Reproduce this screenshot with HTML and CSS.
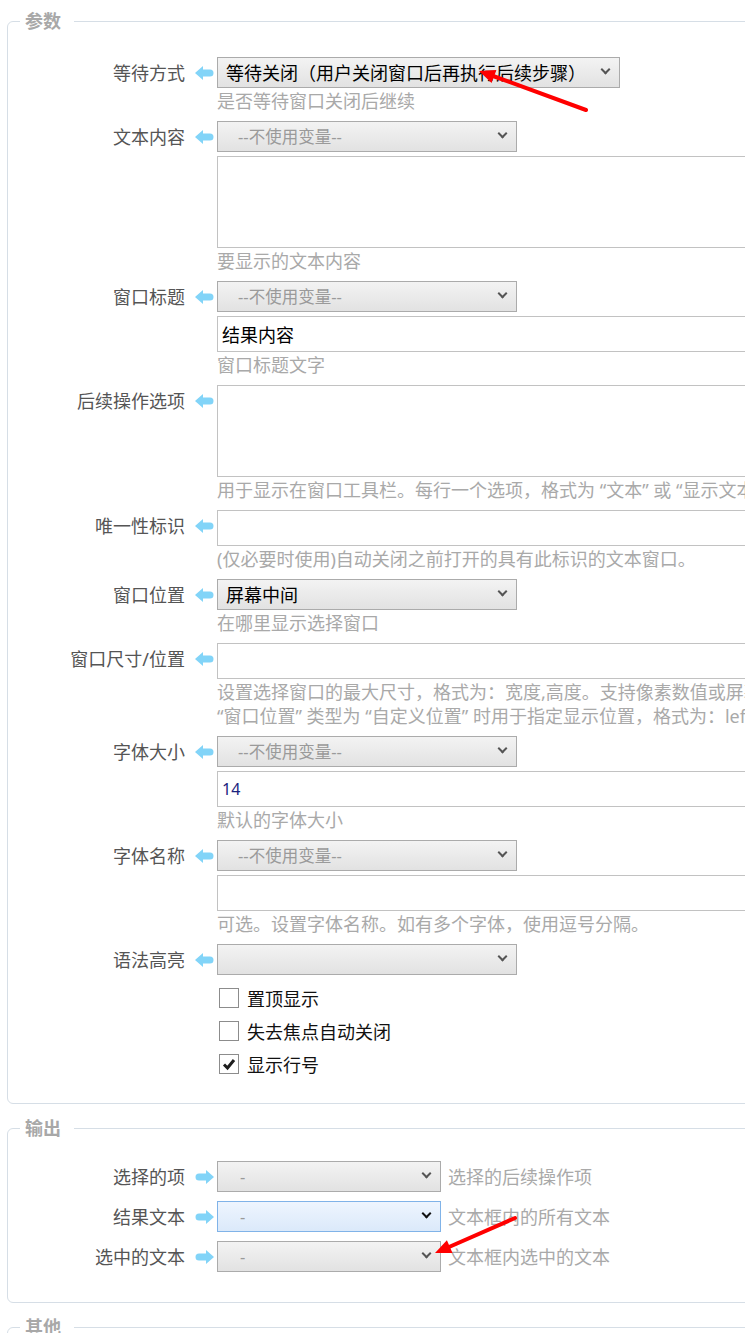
FILE: index.html
```html
<!DOCTYPE html>
<html lang="zh-CN">
<head>
    <meta charset="UTF-8">
    <meta name="viewport" content="width=device-width, initial-scale=1.0">
    <title>文本窗口 - 参数</title>
    <link rel="stylesheet" href="styles.css">
</head>
<body>
    <svg class="defs" width="0" height="0">
        <symbol id="arrow-in" viewBox="0 0 19 14"><path d="M0 7 L8 0 V3.5 H15 A3.5 3.5 0 0 1 15 10.5 H8 V14 Z"/></symbol>
        <symbol id="arrow-out" viewBox="0 0 19 14"><path d="M19 7 L11 0 V3.5 H4 A3.5 3.5 0 0 0 4 10.5 H11 V14 Z"/></symbol>
    </svg>

    <div class="page">
        <fieldset class="group">
            <legend>参数</legend>

            <div class="field">
                <label class="field-label">等待方式</label>
                <span class="bind"><svg><use href="#arrow-in"/></svg></span>
                <div class="field-body">
                    <span class="sel-wrap"><select class="sel sel-wide"><option>等待关闭（用户关闭窗口后再执行后续步骤）</option></select></span>
                    <div class="hint">是否等待窗口关闭后继续</div>
                </div>
            </div>

            <div class="field">
                <label class="field-label">文本内容</label>
                <span class="bind"><svg><use href="#arrow-in"/></svg></span>
                <div class="field-body">
                    <span class="sel-wrap"><select class="sel empty"><option>--不使用变量--</option></select></span>
                    <textarea class="text area"></textarea>
                    <div class="hint">要显示的文本内容</div>
                </div>
            </div>

            <div class="field">
                <label class="field-label">窗口标题</label>
                <span class="bind"><svg><use href="#arrow-in"/></svg></span>
                <div class="field-body">
                    <span class="sel-wrap"><select class="sel empty"><option>--不使用变量--</option></select></span>
                    <input class="text" type="text" value="结果内容">
                    <div class="hint">窗口标题文字</div>
                </div>
            </div>

            <div class="field">
                <label class="field-label">后续操作选项</label>
                <span class="bind"><svg><use href="#arrow-in"/></svg></span>
                <div class="field-body">
                    <textarea class="text area"></textarea>
                    <div class="hint">用于显示在窗口工具栏。每行一个选项，格式为 “文本” 或 “显示文本|返回值”。</div>
                </div>
            </div>

            <div class="field">
                <label class="field-label">唯一性标识</label>
                <span class="bind"><svg><use href="#arrow-in"/></svg></span>
                <div class="field-body">
                    <input class="text" type="text" value="">
                    <div class="hint">(仅必要时使用)自动关闭之前打开的具有此标识的文本窗口。</div>
                </div>
            </div>

            <div class="field">
                <label class="field-label">窗口位置</label>
                <span class="bind"><svg><use href="#arrow-in"/></svg></span>
                <div class="field-body">
                    <span class="sel-wrap"><select class="sel"><option>屏幕中间</option></select></span>
                    <div class="hint">在哪里显示选择窗口</div>
                </div>
            </div>

            <div class="field">
                <label class="field-label">窗口尺寸/位置</label>
                <span class="bind"><svg><use href="#arrow-in"/></svg></span>
                <div class="field-body">
                    <input class="text" type="text" value="">
                    <div class="hint">设置选择窗口的最大尺寸，格式为：宽度,高度。支持像素数值或屏幕百分比。<br>“窗口位置” 类型为 “自定义位置” 时用于指定显示位置，格式为：left,top。</div>
                </div>
            </div>

            <div class="field">
                <label class="field-label">字体大小</label>
                <span class="bind"><svg><use href="#arrow-in"/></svg></span>
                <div class="field-body">
                    <span class="sel-wrap"><select class="sel empty"><option>--不使用变量--</option></select></span>
                    <input class="text number" type="text" value="14">
                    <div class="hint">默认的字体大小</div>
                </div>
            </div>

            <div class="field">
                <label class="field-label">字体名称</label>
                <span class="bind"><svg><use href="#arrow-in"/></svg></span>
                <div class="field-body">
                    <span class="sel-wrap"><select class="sel empty"><option>--不使用变量--</option></select></span>
                    <input class="text" type="text" value="">
                    <div class="hint">可选。设置字体名称。如有多个字体，使用逗号分隔。</div>
                </div>
            </div>

            <div class="field">
                <label class="field-label">语法高亮</label>
                <span class="bind"><svg><use href="#arrow-in"/></svg></span>
                <div class="field-body">
                    <span class="sel-wrap"><select class="sel"><option></option></select></span>
                </div>
            </div>

            <div class="checks">
                <label class="check"><span class="box"></span>置顶显示</label>
                <label class="check"><span class="box"></span>失去焦点自动关闭</label>
                <label class="check"><span class="box"><svg viewBox="0 0 16 16"><path d="M3 8.5 L6.5 12 L13 4"/></svg></span>显示行号</label>
            </div>
        </fieldset>

        <fieldset class="group group-out">
            <legend>输出</legend>

            <div class="field">
                <label class="field-label">选择的项</label>
                <span class="bind"><svg><use href="#arrow-out"/></svg></span>
                <div class="field-body inline">
                    <span class="sel-wrap"><select class="sel sel-short empty dash"><option>-</option></select></span>
                    <span class="hint">选择的后续操作项</span>
                </div>
            </div>

            <div class="field">
                <label class="field-label">结果文本</label>
                <span class="bind"><svg><use href="#arrow-out"/></svg></span>
                <div class="field-body inline">
                    <span class="sel-wrap focus"><select class="sel sel-short empty dash"><option>-</option></select></span>
                    <span class="hint">文本框内的所有文本</span>
                </div>
            </div>

            <div class="field">
                <label class="field-label">选中的文本</label>
                <span class="bind"><svg><use href="#arrow-out"/></svg></span>
                <div class="field-body inline">
                    <span class="sel-wrap"><select class="sel sel-short empty dash"><option>-</option></select></span>
                    <span class="hint">文本框内选中的文本</span>
                </div>
            </div>
        </fieldset>

        <fieldset class="group">
            <legend>其他</legend>
            <div class="field">
                <label class="field-label">备注</label>
                <span class="bind"></span>
                <div class="field-body">
                    <input class="text" type="text" value="">
                </div>
            </div>
        </fieldset>

        <!-- 标注箭头 -->
        <svg class="marks" width="745" height="1333" viewBox="0 0 745 1333">
            <line x1="586" y1="110" x2="493" y2="76"/>
            <polygon points="479,71 496.4,69.9 491.6,83.1"/>
            <line x1="515" y1="1218" x2="449" y2="1247"/>
            <polygon points="435,1253 452.5,1253 446.9,1240.2"/>
        </svg>
    </div>
</body>
</html>
```

FILE: styles.css
```css
html, body {
    overflow: hidden;
}
body {
    margin: 0;
    font-family: "Noto Sans", "Noto Sans CJK SC", sans-serif;
    font-size: 18px;
    color: #555555;
    background: #ffffff;
}
.defs {
    position: absolute;
}
.page {
    position: relative;
    width: 1000px;
    padding: 9px 0 0 7px;
}
.group {
    margin: 0 0 12px;
    padding: 24px 0 23px;
    border: 1px solid #d6dee6;
    border-radius: 6px;
    min-width: 0;
}
.group-out {
    padding: 21px 0 29px;
}
.group legend {
    margin-left: 12px;
    padding: 0 13px 0 5px;
    font-weight: bold;
    line-height: 24px;
    color: #a8a8a8;
}
.field {
    display: grid;
    grid-template-columns: 177px 32px auto;
    align-items: start;
}
.field + .field {
    margin-top: 8px;
}
.field-label {
    text-align: right;
    line-height: 31px;
    padding-top: 1px;
    white-space: nowrap;
}
.bind {
    height: 31px;
    display: flex;
    align-items: center;
    padding-left: 10px;
}
.bind svg {
    width: 19px;
    height: 14px;
    fill: #82d4f8;
}
.field-body {
    display: flex;
    flex-direction: column;
    align-items: flex-start;
}
.field-body.inline {
    flex-direction: row;
    align-items: center;
    gap: 7px;
}
.sel-wrap {
    position: relative;
    display: inline-block;
}
.sel-wrap::after {
    content: "";
    position: absolute;
    right: 11px;
    top: 9px;
    width: 5px;
    height: 5px;
    border-right: 2px solid #555555;
    border-bottom: 2px solid #555555;
    transform: rotate(45deg);
    pointer-events: none;
}
.sel {
    display: block;
    appearance: none;
    -webkit-appearance: none;
    box-sizing: border-box;
    width: 300px;
    height: 31px;
    margin: 0;
    padding: 0 30px 0 8px;
    border: 1px solid #ababab;
    border-radius: 0;
    background: linear-gradient(#f3f3f3, #e2e2e2);
    font-family: inherit;
    font-size: 18px;
    color: #000000;
    outline: none;
}
.sel-wide {
    width: 403px;
}
.sel-short {
    width: 224px;
}
.sel.empty {
    padding-left: 20px;
    font-size: 16.5px;
    color: #9a9a9a;
}
.sel.dash {
    padding-left: 22px;
}
.focus .sel {
    border-color: #80b3e8;
    background: linear-gradient(#eef5fe, #dbe9fa);
}
.focus::after {
    border-color: #111111;
}
.text {
    display: block;
    box-sizing: border-box;
    width: 700px;
    height: 36px;
    margin: 4px 0 0;
    padding: 0 4px;
    border: 1px solid #c2c2c2;
    border-radius: 0;
    font-family: inherit;
    font-size: 18px;
    color: #000000;
    background: #ffffff;
    outline: none;
}
.field-body > .text:first-child {
    margin-top: 0;
}
.text.area {
    height: 92px;
    resize: none;
}
.text.number {
    font-size: 16px;
    color: #1a237e;
}
.hint {
    margin-top: 1px;
    line-height: 24px;
    color: #a9a9a9;
    white-space: nowrap;
}
.inline .hint {
    margin-top: 0;
}
.checks {
    margin: 5px 0 0 211px;
}
.check {
    display: flex;
    align-items: center;
    height: 33px;
    color: #111111;
}
.box {
    width: 20px;
    height: 20px;
    box-sizing: border-box;
    margin-right: 8px;
    border: 1px solid #8c8c8c;
    background: #ffffff;
    display: flex;
    align-items: center;
    justify-content: center;
}
.box svg {
    width: 16px;
    height: 16px;
    fill: none;
    stroke: #1e1e1e;
    stroke-width: 3;
}
.marks {
    position: absolute;
    top: 0;
    left: 0;
    pointer-events: none;
}
.marks line {
    stroke: #ff0000;
    stroke-width: 4;
    stroke-linecap: round;
}
.marks polygon {
    fill: #ff0000;
}
```
